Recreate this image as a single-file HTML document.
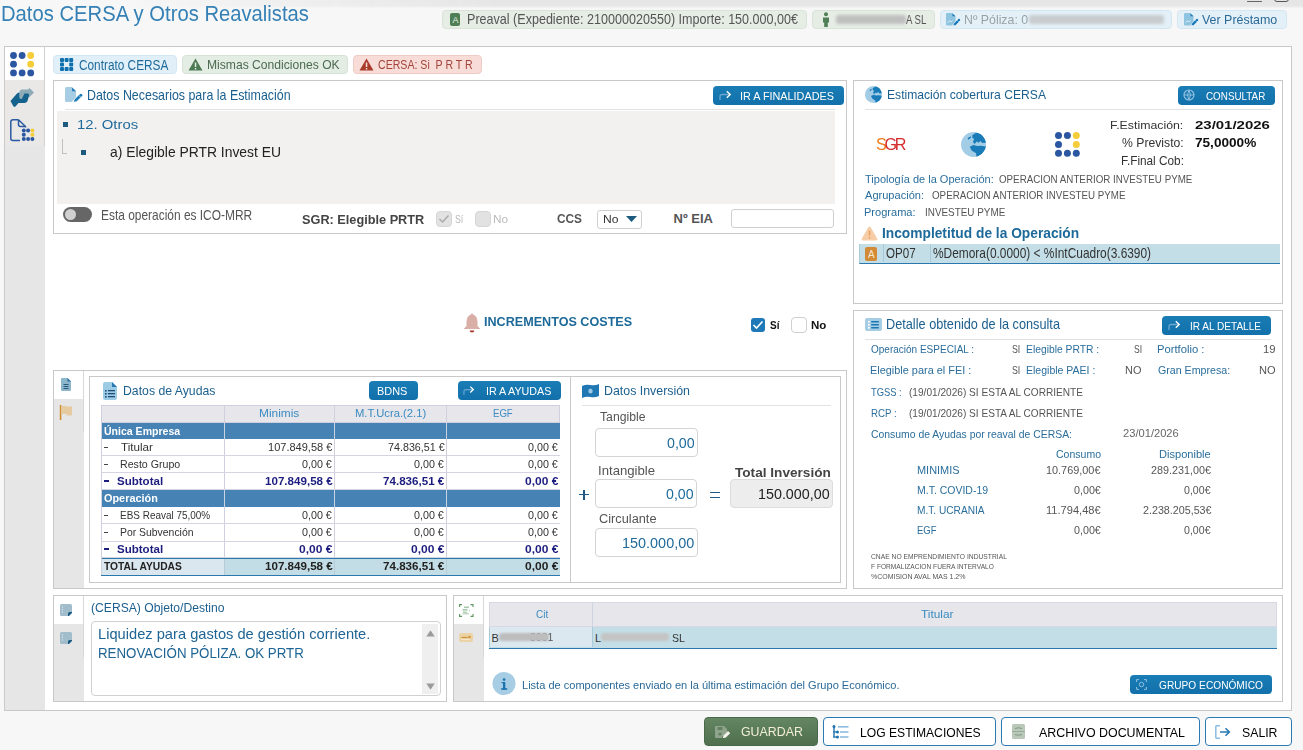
<!DOCTYPE html>
<html><head><meta charset="utf-8"><style>
html,body{margin:0;padding:0;}
body{width:1303px;height:750px;overflow:hidden;position:relative;background:#f7f7f7;font-family:"Liberation Sans",sans-serif;}
div{box-sizing:border-box;}
</style></head><body>
<div style="position:absolute;left:0px;top:0px;width:1303px;height:9px;background:linear-gradient(#e5e5e5 0,#e7e7e7 6px,#f6f6f6 8px,#f7f7f7 9px);-webkit-mask-image:linear-gradient(to right,transparent 120px,#000 500px);mask-image:linear-gradient(to right,transparent 120px,#000 500px);"></div>
<div style="position:absolute;left:1247px;top:0.8px;width:15px;height:1.4000000000000001px;background:#666;border-radius:1px;"></div>
<div style="position:absolute;left:1274px;top:-8px;width:15px;height:10.2px;border:1.3px solid #555;border-radius:3px;"></div>
<div style="position:absolute;left:1.06px;top:3.00px;font-family:'Liberation Sans';font-size:22.0px;font-weight:400;color:#3580b5;letter-spacing:0px;line-height:1;white-space:pre;transform:scaleX(0.9192);transform-origin:0 50%;">Datos CERSA y Otros Reavalistas</div>
<div style="position:absolute;left:442px;top:10px;width:365px;height:19px;background:#e5ede5;border:1px solid #d8e4d8;border-radius:4px;"></div>
<div style="position:absolute;left:450px;top:13px;width:10px;height:13px;background:#4f7f55;border-radius:2px;"></div>
<div style="position:absolute;left:452.50px;top:16.00px;font-family:'Liberation Sans';font-size:9px;font-weight:400;color:#e8f0e8;letter-spacing:0px;line-height:1;white-space:pre;transform:scaleX(1.0000);transform-origin:0 50%;">A</div>
<div style="position:absolute;left:466.76px;top:11.00px;font-family:'Liberation Sans';font-size:15.0px;font-weight:400;color:#555;letter-spacing:0px;line-height:1;white-space:pre;transform:scaleX(0.8373);transform-origin:0 50%;">Preaval (Expediente: 210000020550) Importe: 150.000,00€</div>
<div style="position:absolute;left:812px;top:10px;width:123px;height:19px;background:#e5ede5;border:1px solid #d8e4d8;border-radius:4px;"></div>
<svg style="position:absolute;left:822px;top:12px" width="8" height="15" viewBox="0 0 8 15"><circle cx="4" cy="2.2" r="2" fill="#4f7f55"/><path d="M1 5.5h6v5H5.8V15H2.2V10.5H1z" fill="#4f7f55"/></svg>
<div style="position:absolute;left:836px;top:15px;width:70px;height:9px;background:#bfbfbf;filter:blur(1.4px);border-radius:3px;"></div>
<div style="position:absolute;left:906.00px;top:13.00px;font-family:'Liberation Sans';font-size:13.0px;font-weight:400;color:#555;letter-spacing:0px;line-height:1;white-space:pre;transform:scaleX(0.7407);transform-origin:0 50%;">A SL</div>
<div style="position:absolute;left:940px;top:10px;width:232px;height:19px;background:#e3f0f8;border:1px solid #d3e7f3;border-radius:4px;"></div>
<svg style="position:absolute;left:946px;top:13px" width="15" height="13" viewBox="0 0 15 13"><path d="M0 1.2Q0 0 1.2 0H6.5L9.5 3V9L6 12.5H1.2Q0 12.5 0 11.3z" fill="#8fc4e0"/><path d="M6.3 0.5L9.5 3.3H6.6z" fill="#1a7ab8"/><path d="M1.5 10L3.5 7.5L5 9L6.5 7.5" fill="none" stroke="#e6f2f8" stroke-width="0.8"/><path d="M7 12.8L7.7 10.4L11.3 6.8L13.3 8.8L9.7 12.4z" fill="#1a7ab8" stroke="#e3f0f8" stroke-width="0.7"/><circle cx="13" cy="6.9" r="1.2" fill="#1a7ab8"/></svg>
<div style="position:absolute;left:964.25px;top:13.00px;font-family:'Liberation Sans';font-size:13.0px;font-weight:400;color:#9aa0a4;letter-spacing:0px;line-height:1;white-space:pre;transform:scaleX(0.9478);transform-origin:0 50%;">Nº Póliza: 0</div>
<div style="position:absolute;left:1029px;top:15px;width:135px;height:9px;background:#c8ccce;filter:blur(1.4px);border-radius:3px;"></div>
<div style="position:absolute;left:1177px;top:10px;width:110px;height:19px;background:#e3f0f8;border:1px solid #d3e7f3;border-radius:4px;"></div>
<svg style="position:absolute;left:1184px;top:13px" width="15" height="13" viewBox="0 0 15 13"><path d="M0 1.2Q0 0 1.2 0H6.5L9.5 3V9L6 12.5H1.2Q0 12.5 0 11.3z" fill="#8fc4e0"/><path d="M6.3 0.5L9.5 3.3H6.6z" fill="#1a7ab8"/><path d="M1.5 10L3.5 7.5L5 9L6.5 7.5" fill="none" stroke="#e6f2f8" stroke-width="0.8"/><path d="M7 12.8L7.7 10.4L11.3 6.8L13.3 8.8L9.7 12.4z" fill="#1a7ab8" stroke="#e3f0f8" stroke-width="0.7"/><circle cx="13" cy="6.9" r="1.2" fill="#1a7ab8"/></svg>
<div style="position:absolute;left:1202.20px;top:13.00px;font-family:'Liberation Sans';font-size:13.0px;font-weight:400;color:#2a6a98;letter-spacing:0px;line-height:1;white-space:pre;transform:scaleX(0.9557);transform-origin:0 50%;">Ver Préstamo</div>
<div style="position:absolute;left:4px;top:46px;width:1288px;height:665px;background:#fff;border:1px solid #c9c9c9;"></div>
<div style="position:absolute;left:5px;top:47px;width:40px;height:663px;background:#e6e6e6;"></div>
<div style="position:absolute;left:5px;top:80px;width:39px;height:66px;background:#e9e8e7;"></div>
<div style="position:absolute;left:44px;top:47px;width:1px;height:99px;background:#d2d2d2;"></div>
<div style="position:absolute;left:5px;top:47px;width:39px;height:33px;background:#fff;"></div>
<svg style="position:absolute;left:10px;top:52px" width="25" height="25" viewBox="0 0 25 25"><circle cx="3.5" cy="3.5" r="3.4" fill="#2b57a2"/><circle cx="12.1" cy="3.5" r="3.4" fill="#2b57a2"/><circle cx="20.7" cy="3.5" r="3.4" fill="#f5cd3b"/><circle cx="3.5" cy="12.2" r="3.4" fill="#2b57a2"/><circle cx="20.7" cy="12.2" r="3.4" fill="#f5cd3b"/><circle cx="3.5" cy="20.9" r="3.4" fill="#2b57a2"/><circle cx="12.1" cy="20.9" r="3.4" fill="#2b57a2"/><circle cx="20.7" cy="20.9" r="3.4" fill="#2b57a2"/></svg>
<svg style="position:absolute;left:10px;top:88px" width="24" height="19" viewBox="0 0 24 19"><path d="M9.5 3.5Q10 1.5 12 1.5H18L19.5 0L24 4.5L19 9.5H14V10H9.5z" fill="#8eabb8"/><path d="M0.5 13L7 5.5Q8 4.5 9.5 4.5V9.5Q9.5 10.5 10.5 10.5H12L14.5 5.5H17.5Q19.5 5.5 19 7.5L17.5 13Q16.5 15 14.5 15H8.5L5.5 18.5Q4.5 19 3.5 18.5z" fill="#15628c"/></svg>
<svg style="position:absolute;left:10px;top:119px" width="25" height="23" viewBox="0 0 25 23"><path d="M8.5 0.8H3Q0.8 0.8 0.8 3V19.5Q0.8 21.5 3 21.5H10 M8.5 0.8L15.5 7.5V8.5 M8.5 0.8V5.5Q8.5 7.5 10.5 7.5H15.5" fill="none" stroke="#2a5aa0" stroke-width="1.5"/><rect x="10.5" y="9" width="14.5" height="14" fill="#e8e8e7"/><circle cx="13.8" cy="11.5" r="2.0" fill="#2b57a2"/><circle cx="18.1" cy="11.5" r="2.0" fill="#2b57a2"/><circle cx="22.4" cy="11.5" r="2.0" fill="#f5cd3b"/><circle cx="13.8" cy="15.7" r="2.0" fill="#2b57a2"/><circle cx="22.4" cy="15.7" r="2.0" fill="#f5cd3b"/><circle cx="13.8" cy="19.9" r="2.0" fill="#2b57a2"/><circle cx="18.1" cy="19.9" r="2.0" fill="#2b57a2"/><circle cx="22.4" cy="19.9" r="2.0" fill="#2b57a2"/></svg>
<div style="position:absolute;left:53px;top:55px;width:124px;height:19px;background:#e1f0f8;border:1px solid #d2e7f3;border-radius:4px;"></div>
<svg style="position:absolute;left:60px;top:58px" width="14" height="14" viewBox="0 0 14 14"><rect x="0.0" y="0.0" width="4" height="4" rx="1" fill="#0f70ad"/><rect x="4.6" y="0.0" width="4" height="4" rx="1" fill="#0f70ad"/><rect x="9.2" y="0.0" width="4" height="4" rx="1" fill="#0f70ad"/><rect x="0.0" y="4.5" width="4" height="4" rx="1" fill="#0f70ad"/><rect x="9.2" y="4.5" width="4" height="4" rx="1" fill="#0f70ad"/><rect x="0.0" y="9.0" width="4" height="4" rx="1" fill="#0f70ad"/><rect x="4.6" y="9.0" width="4" height="4" rx="1" fill="#0f70ad"/><rect x="9.2" y="9.0" width="4" height="4" rx="1" fill="#0f70ad"/></svg>
<div style="position:absolute;left:78.50px;top:58.00px;font-family:'Liberation Sans';font-size:14.0px;font-weight:400;color:#1e6a9a;letter-spacing:0px;line-height:1;white-space:pre;transform:scaleX(0.8443);transform-origin:0 50%;">Contrato CERSA</div>
<div style="position:absolute;left:182px;top:55px;width:166px;height:19px;background:#e4ede4;border:1px solid #d5e2d5;border-radius:4px;"></div>
<svg style="position:absolute;left:188px;top:58px" width="15" height="13" viewBox="0 0 15 13"><path d="M7.5 0.5L14.5 12.5H0.5z" fill="#4c7a52"/><rect x="6.8" y="4.5" width="1.5" height="4.5" fill="#e4ede4"/><rect x="6.8" y="10" width="1.5" height="1.5" fill="#e4ede4"/></svg>
<div style="position:absolute;left:206.77px;top:58.00px;font-family:'Liberation Sans';font-size:13.0px;font-weight:400;color:#4d6a52;letter-spacing:0px;line-height:1;white-space:pre;transform:scaleX(0.9319);transform-origin:0 50%;">Mismas Condiciones OK</div>
<div style="position:absolute;left:353px;top:55px;width:129px;height:19px;background:#f8dcd8;border:1px solid #f0cbc6;border-radius:4px;"></div>
<svg style="position:absolute;left:359px;top:58px" width="15" height="13" viewBox="0 0 15 13"><path d="M7.5 0.5L14.5 12.5H0.5z" fill="#a83b2c"/><rect x="6.8" y="4.5" width="1.5" height="4.5" fill="#f8dcd8"/><rect x="6.8" y="10" width="1.5" height="1.5" fill="#f8dcd8"/></svg>
<div style="position:absolute;left:378.40px;top:58.00px;font-family:'Liberation Sans';font-size:13.0px;font-weight:400;color:#a3443a;letter-spacing:0px;line-height:1;white-space:pre;transform:scaleX(0.8138);transform-origin:0 50%;">CERSA: Si  P R T R</div>
<div style="position:absolute;left:53px;top:80px;width:794px;height:154px;border:1px solid #c9c9c9;background:#fff;"></div>
<svg style="position:absolute;left:65px;top:87px" width="18" height="16" viewBox="0 0 18 16"><path d="M0 1.5Q0 0 1.5 0H7L11 4V10.5L6.5 15H1.5Q0 15 0 13.5z" fill="#a6cde3"/><path d="M6.8 0.6L11 4.3H7.3z" fill="#1a7ab8"/><path d="M8.3 15.2L9.2 12.4L13.6 8L16 10.4L11.6 14.8z" fill="#1a7ab8" stroke="#fff" stroke-width="0.8"/><circle cx="15.8" cy="8.2" r="1.5" fill="#1a7ab8"/></svg>
<div style="position:absolute;left:86.57px;top:87.00px;font-family:'Liberation Sans';font-size:15.0px;font-weight:400;color:#1b5f8f;letter-spacing:0px;line-height:1;white-space:pre;transform:scaleX(0.8279);transform-origin:0 50%;">Datos Necesarios para la Estimación</div>
<div style="position:absolute;left:713px;top:86px;width:131px;height:19px;background:linear-gradient(#1a7db5,#1270aa);border-radius:4px;"></div>
<svg style="position:absolute;left:719px;top:90px" width="14" height="11" viewBox="0 0 14 11"><path d="M1 10V6.5Q1 4.5 3 4.5H11" fill="none" stroke="#6aa6d0" stroke-width="1.3"/><path d="M7.8 1.3L11.2 4.5L7.8 7.7" fill="none" stroke="#fff" stroke-width="1.4"/></svg>
<div style="position:absolute;left:740.41px;top:91.00px;font-family:'Liberation Sans';font-size:11.0px;font-weight:400;color:#fff;letter-spacing:0px;line-height:1;white-space:pre;transform:scaleX(0.9851);transform-origin:0 50%;">IR A FINALIDADES</div>
<div style="position:absolute;left:65px;top:109px;width:770px;height:1px;background:#e2e2e2;"></div>
<div style="position:absolute;left:57px;top:111px;width:778px;height:93px;background:#f2f1ef;"></div>
<div style="position:absolute;left:63px;top:122px;width:5px;height:5px;background:#1d5a80;"></div>
<div style="position:absolute;left:77.46px;top:118.00px;font-family:'Liberation Sans';font-size:13.0px;font-weight:400;color:#1e6a9a;letter-spacing:0px;line-height:1;white-space:pre;transform:scaleX(1.1423);transform-origin:0 50%;">12. Otros</div>
<div style="position:absolute;left:62px;top:139px;width:1px;height:15px;background:#c0c0c0;"></div>
<div style="position:absolute;left:62px;top:153px;width:5px;height:1px;background:#c0c0c0;"></div>
<div style="position:absolute;left:81px;top:150px;width:5px;height:5px;background:#1d5a80;"></div>
<div style="position:absolute;left:109.90px;top:144.00px;font-family:'Liberation Sans';font-size:15.0px;font-weight:400;color:#222;letter-spacing:0px;line-height:1;white-space:pre;transform:scaleX(0.9255);transform-origin:0 50%;">a) Elegible PRTR Invest EU</div>
<div style="position:absolute;left:63px;top:207px;width:29px;height:15px;background:#666;border-radius:8px;"></div>
<div style="position:absolute;left:65px;top:209px;width:11px;height:11px;border-radius:50%;background:#d0d0d0;"></div>
<div style="position:absolute;left:100.70px;top:207.00px;font-family:'Liberation Sans';font-size:15.0px;font-weight:400;color:#555;letter-spacing:0px;line-height:1;white-space:pre;transform:scaleX(0.7952);transform-origin:0 50%;">Esta operación es ICO-MRR</div>
<div style="position:absolute;left:302.00px;top:213.00px;font-family:'Liberation Sans';font-size:13.0px;font-weight:700;color:#444;letter-spacing:0px;line-height:1;white-space:pre;transform:scaleX(0.9784);transform-origin:0 50%;">SGR: Elegible PRTR</div>
<div style="position:absolute;left:436px;top:211px;width:16px;height:16px;background:#e2e2e2;border:1px solid #d6d6d6;border-radius:4px;"></div>
<svg style="position:absolute;left:438px;top:214px" width="12" height="10" viewBox="0 0 12 10"><path d="M1.5 5L4.5 8L10.5 1.5" fill="none" stroke="#a8a8a8" stroke-width="1.4"/></svg>
<div style="position:absolute;left:455.00px;top:214.00px;font-family:'Liberation Sans';font-size:11.0px;font-weight:400;color:#bbb;letter-spacing:0px;line-height:1;white-space:pre;transform:scaleX(0.8000);transform-origin:0 50%;">Sí</div>
<div style="position:absolute;left:475px;top:211px;width:16px;height:16px;background:#e2e2e2;border:1px solid #d6d6d6;border-radius:4px;"></div>
<div style="position:absolute;left:492.92px;top:214.00px;font-family:'Liberation Sans';font-size:11.0px;font-weight:400;color:#bbb;letter-spacing:0px;line-height:1;white-space:pre;transform:scaleX(1.0769);transform-origin:0 50%;">No</div>
<div style="position:absolute;left:556.70px;top:212.00px;font-family:'Liberation Sans';font-size:13.0px;font-weight:700;color:#555;letter-spacing:0px;line-height:1;white-space:pre;transform:scaleX(0.9111);transform-origin:0 50%;">CCS</div>
<div style="position:absolute;left:597px;top:210px;width:45px;height:19px;border:1px solid #cfcfcf;border-radius:3px;background:#fff;"></div>
<div style="position:absolute;left:603.20px;top:214.00px;font-family:'Liberation Sans';font-size:11.0px;font-weight:400;color:#333;letter-spacing:0px;line-height:1;white-space:pre;transform:scaleX(1.1000);transform-origin:0 50%;">No</div>
<svg style="position:absolute;left:626px;top:216px" width="11" height="7" viewBox="0 0 11 7"><path d="M0 0H11L5.5 6z" fill="#1d5a80"/></svg>
<div style="position:absolute;left:673.60px;top:212.00px;font-family:'Liberation Sans';font-size:13.0px;font-weight:700;color:#555;letter-spacing:0px;line-height:1;white-space:pre;transform:scaleX(1.0000);transform-origin:0 50%;">Nº EIA</div>
<div style="position:absolute;left:731px;top:209px;width:103px;height:19px;border:1px solid #cfcfcf;border-radius:3px;background:#fff;"></div>
<div style="position:absolute;left:853px;top:80px;width:430px;height:224px;border:1px solid #c9c9c9;background:#fff;"></div>
<svg style="position:absolute;left:865px;top:86px" width="17" height="17" viewBox="0 0 20 20"><defs><clipPath id="gc865"><circle cx="10" cy="10" r="10"/></clipPath></defs><circle cx="10" cy="10" r="10" fill="#a3cde6"/><g clip-path="url(#gc865)" fill="#1a7bb9"><path d="M9 2.5L12 0.6Q16 0.8 18.5 3L20.5 8.5L17 8.8L15.5 7.2L14 8.6L12.5 7.6L11 9.6L9.5 8L10.5 5.5L9 4.5z"/><path d="M7 11.8L10 10.4L13 11.2L16 10.9L20.5 11.6Q19 16 14.5 20L12.5 20.5L12 17L8.5 14.8z"/><path d="M5.3 5L7.5 3.3L8 4.5L6 6.2z"/></g></svg>
<div style="position:absolute;left:886.57px;top:88.00px;font-family:'Liberation Sans';font-size:13.0px;font-weight:400;color:#1b5f8f;letter-spacing:0px;line-height:1;white-space:pre;transform:scaleX(0.9324);transform-origin:0 50%;">Estimación cobertura CERSA</div>
<div style="position:absolute;left:1178px;top:86px;width:97px;height:19px;background:linear-gradient(#1a7db5,#1270aa);border-radius:4px;"></div>
<svg style="position:absolute;left:1183px;top:89px" width="12" height="12" viewBox="0 0 12 12"><circle cx="6" cy="6" r="5" fill="none" stroke="#8fc0e0" stroke-width="1.2"/><path d="M1 6H11M6 1Q3 6 6 11M6 1Q9 6 6 11" fill="none" stroke="#8fc0e0" stroke-width="1"/></svg>
<div style="position:absolute;left:1205.70px;top:91.00px;font-family:'Liberation Sans';font-size:11.0px;font-weight:400;color:#fff;letter-spacing:0px;line-height:1;white-space:pre;transform:scaleX(0.8955);transform-origin:0 50%;">CONSULTAR</div>
<div style="position:absolute;left:865px;top:109px;width:406px;height:1px;background:#e2e2e2;"></div>
<div style="position:absolute;left:876px;top:136px;font-family:'Liberation Sans';font-size:17px;font-weight:400;letter-spacing:-2.4px;line-height:1;color:#d42a2a;transform:scaleX(0.95);transform-origin:0 0"><span style="color:#ef7a1a">S</span>GR</div>
<svg style="position:absolute;left:961px;top:132px" width="25" height="25" viewBox="0 0 20 20"><defs><clipPath id="gc961"><circle cx="10" cy="10" r="10"/></clipPath></defs><circle cx="10" cy="10" r="10" fill="#a3cde6"/><g clip-path="url(#gc961)" fill="#1a7bb9"><path d="M9 2.5L12 0.6Q16 0.8 18.5 3L20.5 8.5L17 8.8L15.5 7.2L14 8.6L12.5 7.6L11 9.6L9.5 8L10.5 5.5L9 4.5z"/><path d="M7 11.8L10 10.4L13 11.2L16 10.9L20.5 11.6Q19 16 14.5 20L12.5 20.5L12 17L8.5 14.8z"/><path d="M5.3 5L7.5 3.3L8 4.5L6 6.2z"/></g></svg>
<svg style="position:absolute;left:1055px;top:132px" width="26" height="26" viewBox="0 0 26 26"><circle cx="3.5" cy="3.5" r="3.5" fill="#2b57a2"/><circle cx="12.4" cy="3.5" r="3.5" fill="#2b57a2"/><circle cx="21.3" cy="3.5" r="3.5" fill="#f5cd3b"/><circle cx="3.5" cy="12.4" r="3.5" fill="#2b57a2"/><circle cx="21.3" cy="12.4" r="3.5" fill="#f5cd3b"/><circle cx="3.5" cy="21.3" r="3.5" fill="#2b57a2"/><circle cx="12.4" cy="21.3" r="3.5" fill="#2b57a2"/><circle cx="21.3" cy="21.3" r="3.5" fill="#2b57a2"/></svg>
<div style="position:absolute;left:1110.38px;top:120.00px;font-family:'Liberation Sans';font-size:11.0px;font-weight:400;color:#333;letter-spacing:0px;line-height:1;white-space:pre;transform:scaleX(1.1203);transform-origin:0 50%;">F.Estimación:</div>
<div style="position:absolute;left:1194.80px;top:120.00px;font-family:'Liberation Sans';font-size:11.0px;font-weight:700;color:#111;letter-spacing:0px;line-height:1;white-space:pre;transform:scaleX(1.3600);transform-origin:0 50%;">23/01/2026</div>
<div style="position:absolute;left:1122.20px;top:136.00px;font-family:'Liberation Sans';font-size:13.0px;font-weight:400;color:#333;letter-spacing:0px;line-height:1;white-space:pre;transform:scaleX(0.9385);transform-origin:0 50%;">% Previsto:</div>
<div style="position:absolute;left:1194.80px;top:136.00px;font-family:'Liberation Sans';font-size:13.0px;font-weight:700;color:#111;letter-spacing:0px;line-height:1;white-space:pre;transform:scaleX(1.0458);transform-origin:0 50%;">75,0000%</div>
<div style="position:absolute;left:1120.59px;top:154.00px;font-family:'Liberation Sans';font-size:13.0px;font-weight:400;color:#333;letter-spacing:0px;line-height:1;white-space:pre;transform:scaleX(0.9074);transform-origin:0 50%;">F.Final Cob:</div>
<div style="position:absolute;left:865.20px;top:174.00px;font-family:'Liberation Sans';font-size:11.0px;font-weight:400;color:#2a6e9c;letter-spacing:0px;line-height:1;white-space:pre;transform:scaleX(1.0008);transform-origin:0 50%;">Tipología de la Operación:</div>
<div style="position:absolute;left:999.20px;top:174.00px;font-family:'Liberation Sans';font-size:11.0px;font-weight:400;color:#555;letter-spacing:0px;line-height:1;white-space:pre;transform:scaleX(0.8885);transform-origin:0 50%;">OPERACION ANTERIOR INVESTEU PYME</div>
<div style="position:absolute;left:865.20px;top:190.00px;font-family:'Liberation Sans';font-size:11.0px;font-weight:400;color:#2a6e9c;letter-spacing:0px;line-height:1;white-space:pre;transform:scaleX(1.0052);transform-origin:0 50%;">Agrupación:</div>
<div style="position:absolute;left:931.50px;top:190.00px;font-family:'Liberation Sans';font-size:11.0px;font-weight:400;color:#555;letter-spacing:0px;line-height:1;white-space:pre;transform:scaleX(0.8889);transform-origin:0 50%;">OPERACION ANTERIOR INVESTEU PYME</div>
<div style="position:absolute;left:864.20px;top:207.00px;font-family:'Liberation Sans';font-size:11.0px;font-weight:400;color:#2a6e9c;letter-spacing:0px;line-height:1;white-space:pre;transform:scaleX(1.0040);transform-origin:0 50%;">Programa:</div>
<div style="position:absolute;left:925.30px;top:207.00px;font-family:'Liberation Sans';font-size:11.0px;font-weight:400;color:#555;letter-spacing:0px;line-height:1;white-space:pre;transform:scaleX(0.9000);transform-origin:0 50%;">INVESTEU PYME</div>
<svg style="position:absolute;left:861px;top:226px" width="17" height="15" viewBox="0 0 17 15"><path d="M8.5 0.5Q9.3 0.5 9.8 1.4L16.3 12.8Q16.8 14.5 15.2 14.5H1.8Q0.2 14.5 0.7 12.8L7.2 1.4Q7.7 0.5 8.5 0.5z" fill="#f6cda6"/><rect x="7.8" y="4.5" width="1.5" height="5" fill="#e8a060"/><rect x="7.8" y="11" width="1.5" height="1.5" fill="#e8a060"/></svg>
<div style="position:absolute;left:882.28px;top:225.00px;font-family:'Liberation Sans';font-size:15.0px;font-weight:700;color:#1d6a9a;letter-spacing:0px;line-height:1;white-space:pre;transform:scaleX(0.9169);transform-origin:0 50%;">Incompletitud de la Operación</div>
<div style="position:absolute;left:859px;top:244px;width:421px;height:20px;background:#c3dee6;border-bottom:1px solid #2a78ae;border-left:1px solid #a9cad8;"></div>
<div style="position:absolute;left:883px;top:244px;width:1px;height:18px;background:#a9cad8;"></div>
<div style="position:absolute;left:930px;top:244px;width:1px;height:18px;background:#a9cad8;"></div>
<div style="position:absolute;left:865px;top:247px;width:12px;height:14px;background:#d38a36;border-radius:2px;"></div>
<div style="position:absolute;left:868.00px;top:250.00px;font-family:'Liberation Sans';font-size:10px;font-weight:400;color:#f8e8d0;letter-spacing:0px;line-height:1;white-space:pre;transform:scaleX(1.0000);transform-origin:0 50%;">A</div>
<div style="position:absolute;left:886.00px;top:245.00px;font-family:'Liberation Sans';font-size:15.0px;font-weight:400;color:#333;letter-spacing:0px;line-height:1;white-space:pre;transform:scaleX(0.7737);transform-origin:0 50%;">OP07</div>
<div style="position:absolute;left:933.00px;top:245.00px;font-family:'Liberation Sans';font-size:15.0px;font-weight:400;color:#333;letter-spacing:0px;line-height:1;white-space:pre;transform:scaleX(0.7938);transform-origin:0 50%;">%Demora(0.0000) &lt; %IntCuadro(3.6390)</div>
<svg style="position:absolute;left:462px;top:313px" width="20" height="20" viewBox="0 0 20 20"><path d="M10 0.5Q11 0.5 11 1.5Q15.5 3 15.5 9V13L18.5 16H1.5L4.5 13V9Q4.5 3 9 1.5Q9 0.5 10 0.5z" fill="#d9aea6"/><path d="M7.5 17.5H12.5Q12 19.5 10 19.5Q8 19.5 7.5 17.5z" fill="#a8342a"/></svg>
<div style="position:absolute;left:483.93px;top:315.00px;font-family:'Liberation Sans';font-size:13.0px;font-weight:700;color:#1d6a9a;letter-spacing:0px;line-height:1;white-space:pre;transform:scaleX(0.9691);transform-origin:0 50%;">INCREMENTOS COSTES</div>
<div style="position:absolute;left:751px;top:318px;width:14px;height:14px;background:#1f78b8;border-radius:3px;"></div>
<svg style="position:absolute;left:752px;top:320px" width="12" height="10" viewBox="0 0 12 10"><path d="M1.5 5L4.5 8L10.5 1.5" fill="none" stroke="#fff" stroke-width="1.6"/></svg>
<div style="position:absolute;left:769.50px;top:320.00px;font-family:'Liberation Sans';font-size:11.0px;font-weight:700;color:#111;letter-spacing:0px;line-height:1;white-space:pre;transform:scaleX(0.9091);transform-origin:0 50%;">Sí</div>
<div style="position:absolute;left:791px;top:317px;width:16px;height:16px;background:#fff;border:1px solid #cfcfcf;border-radius:4px;"></div>
<div style="position:absolute;left:810.60px;top:320.00px;font-family:'Liberation Sans';font-size:11.0px;font-weight:700;color:#111;letter-spacing:0px;line-height:1;white-space:pre;transform:scaleX(1.0467);transform-origin:0 50%;">No</div>
<div style="position:absolute;left:53px;top:370px;width:794px;height:219px;border:1px solid #c9c9c9;background:#fff;"></div>
<div style="position:absolute;left:54px;top:371px;width:30px;height:217px;background:#e6e6e6;"></div>
<div style="position:absolute;left:54px;top:371px;width:30px;height:28px;background:#fff;"></div>
<div style="position:absolute;left:83px;top:371px;width:1px;height:61px;background:#d8d8d8;"></div>
<svg style="position:absolute;left:61px;top:378px" width="10" height="13" viewBox="0 0 10 13"><path d="M0 1Q0 0 1 0H6.5L10 3.5V12Q10 13 9 13H1Q0 13 0 12z" fill="#8cb6cc"/><path d="M6.5 0V3.5H10z" fill="#2a6a9a"/><rect x="2.5" y="6" width="5" height="1" fill="#2a5a7a"/><rect x="2.5" y="8" width="5" height="1" fill="#2a5a7a"/><rect x="2.5" y="10" width="5" height="1" fill="#2a5a7a"/></svg>
<svg style="position:absolute;left:59px;top:405px" width="14" height="15" viewBox="0 0 14 15"><rect x="0.8" y="0" width="1.6" height="15" fill="#d08e30"/><path d="M2.3 1H7.5V1.6H13V10.5H7.5V9H2.3z" fill="#e5cb9f"/></svg>
<div style="position:absolute;left:89px;top:376px;width:752px;height:207px;border:1px solid #c9c9c9;background:#fff;"></div>
<div style="position:absolute;left:570px;top:377px;width:1px;height:205px;background:#c9c9c9;"></div>
<svg style="position:absolute;left:103px;top:382px" width="14" height="18" viewBox="0 0 14 18"><path d="M0 2Q0 0 2 0H9L14 5V16Q14 18 12 18H2Q0 18 0 16z" fill="#9ccbe6"/><path d="M9 0V5H14z" fill="#2a78b0"/><g fill="#1e4e78"><rect x="2" y="8" width="1.6" height="1.6"/><rect x="2" y="11" width="1.6" height="1.6"/><rect x="2" y="14" width="1.6" height="1.6"/><rect x="5" y="8" width="7" height="1.3"/><rect x="5" y="11" width="7" height="1.3"/><rect x="5" y="14" width="7" height="1.3"/></g></svg>
<div style="position:absolute;left:123.06px;top:384.00px;font-family:'Liberation Sans';font-size:13.0px;font-weight:400;color:#1b5f8f;letter-spacing:0px;line-height:1;white-space:pre;transform:scaleX(0.9423);transform-origin:0 50%;">Datos de Ayudas</div>
<div style="position:absolute;left:369px;top:381px;width:49px;height:19px;background:linear-gradient(#1a7db5,#1270aa);border-radius:4px;"></div>
<div style="position:absolute;left:377.31px;top:386.00px;font-family:'Liberation Sans';font-size:11.0px;font-weight:400;color:#fff;letter-spacing:0px;line-height:1;white-space:pre;transform:scaleX(0.9931);transform-origin:0 50%;">BDNS</div>
<div style="position:absolute;left:458px;top:381px;width:103px;height:19px;background:linear-gradient(#1a7db5,#1270aa);border-radius:4px;"></div>
<svg style="position:absolute;left:463px;top:385px" width="13" height="11" viewBox="0 0 14 11"><path d="M1 10V6.5Q1 4.5 3 4.5H11" fill="none" stroke="#6aa6d0" stroke-width="1.3"/><path d="M7.8 1.3L11.2 4.5L7.8 7.7" fill="none" stroke="#fff" stroke-width="1.4"/></svg>
<div style="position:absolute;left:485.73px;top:386.00px;font-family:'Liberation Sans';font-size:11.0px;font-weight:400;color:#fff;letter-spacing:0px;line-height:1;white-space:pre;transform:scaleX(0.9742);transform-origin:0 50%;">IR A AYUDAS</div>
<div style="position:absolute;left:101px;top:405px;width:459px;height:18px;background:#e7e7eb;border:1px solid #cfcfdf;"></div>
<div style="position:absolute;left:224px;top:405px;width:1px;height:153px;background:#cfcfdf;"></div>
<div style="position:absolute;left:334px;top:405px;width:1px;height:153px;background:#cfcfdf;"></div>
<div style="position:absolute;left:446px;top:405px;width:1px;height:153px;background:#cfcfdf;"></div>
<div style="position:absolute;left:259.32px;top:408.00px;font-family:'Liberation Sans';font-size:11.0px;font-weight:400;color:#3b8bc2;letter-spacing:0px;line-height:1;white-space:pre;transform:scaleX(1.0806);transform-origin:0 50%;">Minimis</div>
<div style="position:absolute;left:354.68px;top:408.00px;font-family:'Liberation Sans';font-size:11.0px;font-weight:400;color:#3b8bc2;letter-spacing:0px;line-height:1;white-space:pre;transform:scaleX(1.0221);transform-origin:0 50%;">M.T.Ucra.(2.1)</div>
<div style="position:absolute;left:493.33px;top:408.00px;font-family:'Liberation Sans';font-size:11.0px;font-weight:400;color:#3b8bc2;letter-spacing:0px;line-height:1;white-space:pre;transform:scaleX(0.8727);transform-origin:0 50%;">EGF</div>
<div style="position:absolute;left:101px;top:423px;width:459px;height:16px;background:#4682b4;"></div>
<div style="position:absolute;left:224px;top:423px;width:1px;height:16px;background:#c8d4e4;"></div>
<div style="position:absolute;left:334px;top:423px;width:1px;height:16px;background:#c8d4e4;"></div>
<div style="position:absolute;left:446px;top:423px;width:1px;height:16px;background:#c8d4e4;"></div>
<div style="position:absolute;left:101px;top:455px;width:459px;height:1px;background:#d4d4e2;"></div>
<div style="position:absolute;left:101px;top:472px;width:459px;height:1px;background:#d4d4e2;"></div>
<div style="position:absolute;left:101px;top:489px;width:459px;height:1px;background:#d4d4e2;"></div>
<div style="position:absolute;left:101px;top:490px;width:459px;height:17px;background:#4682b4;"></div>
<div style="position:absolute;left:224px;top:490px;width:1px;height:17px;background:#c8d4e4;"></div>
<div style="position:absolute;left:334px;top:490px;width:1px;height:17px;background:#c8d4e4;"></div>
<div style="position:absolute;left:446px;top:490px;width:1px;height:17px;background:#c8d4e4;"></div>
<div style="position:absolute;left:101px;top:523px;width:459px;height:1px;background:#d4d4e2;"></div>
<div style="position:absolute;left:101px;top:541px;width:459px;height:1px;background:#d4d4e2;"></div>
<div style="position:absolute;left:101px;top:557px;width:459px;height:1px;background:#d4d4e2;"></div>
<div style="position:absolute;left:101px;top:558px;width:123px;height:17px;background:#dbe7ef;"></div>
<div style="position:absolute;left:224px;top:558px;width:336px;height:17px;background:#c3dde6;"></div>
<div style="position:absolute;left:224px;top:559px;width:1px;height:16px;background:#b8ccd8;"></div>
<div style="position:absolute;left:334px;top:559px;width:1px;height:16px;background:#b8ccd8;"></div>
<div style="position:absolute;left:446px;top:559px;width:1px;height:16px;background:#b8ccd8;"></div>
<div style="position:absolute;left:101px;top:558px;width:459px;height:1px;background:#2a78ae;"></div>
<div style="position:absolute;left:101px;top:575px;width:459px;height:1px;background:#2a78ae;"></div>
<div style="position:absolute;left:101px;top:423px;width:1px;height:152px;background:#cfcfdf;"></div>
<div style="position:absolute;left:104.40px;top:426.00px;font-family:'Liberation Sans';font-size:11.0px;font-weight:700;color:#fff;letter-spacing:0px;line-height:1;white-space:pre;transform:scaleX(0.9575);transform-origin:0 50%;">Única Empresa</div>
<div style="position:absolute;left:104px;top:447px;width:4px;height:1px;background:#444;"></div>
<div style="position:absolute;left:120.50px;top:442.00px;font-family:'Liberation Sans';font-size:11.0px;font-weight:400;color:#333;letter-spacing:0px;line-height:1;white-space:pre;transform:scaleX(1.0567);transform-origin:0 50%;">Titular</div>
<div style="position:absolute;left:268.20px;top:442.00px;font-family:'Liberation Sans';font-size:11.0px;font-weight:400;color:#333;letter-spacing:0px;line-height:1;white-space:pre;transform:scaleX(1.0016);transform-origin:0 50%;">107.849,58 €</div>
<div style="position:absolute;left:387.60px;top:442.00px;font-family:'Liberation Sans';font-size:11.0px;font-weight:400;color:#333;letter-spacing:0px;line-height:1;white-space:pre;transform:scaleX(0.9759);transform-origin:0 50%;">74.836,51 €</div>
<div style="position:absolute;left:527.70px;top:442.00px;font-family:'Liberation Sans';font-size:11.0px;font-weight:400;color:#333;letter-spacing:0px;line-height:1;white-space:pre;transform:scaleX(0.9742);transform-origin:0 50%;">0,00 €</div>
<div style="position:absolute;left:104px;top:464px;width:4px;height:1px;background:#444;"></div>
<div style="position:absolute;left:119.53px;top:459.00px;font-family:'Liberation Sans';font-size:11.0px;font-weight:400;color:#333;letter-spacing:0px;line-height:1;white-space:pre;transform:scaleX(0.9656);transform-origin:0 50%;">Resto Grupo</div>
<div style="position:absolute;left:302.10px;top:459.00px;font-family:'Liberation Sans';font-size:11.0px;font-weight:400;color:#333;letter-spacing:0px;line-height:1;white-space:pre;transform:scaleX(0.9742);transform-origin:0 50%;">0,00 €</div>
<div style="position:absolute;left:414.00px;top:459.00px;font-family:'Liberation Sans';font-size:11.0px;font-weight:400;color:#333;letter-spacing:0px;line-height:1;white-space:pre;transform:scaleX(0.9742);transform-origin:0 50%;">0,00 €</div>
<div style="position:absolute;left:527.70px;top:459.00px;font-family:'Liberation Sans';font-size:11.0px;font-weight:400;color:#333;letter-spacing:0px;line-height:1;white-space:pre;transform:scaleX(0.9742);transform-origin:0 50%;">0,00 €</div>
<div style="position:absolute;left:104px;top:480.2px;width:5px;height:1.6000000000000227px;background:#1d1d80;"></div>
<div style="position:absolute;left:117.00px;top:476.00px;font-family:'Liberation Sans';font-size:11.0px;font-weight:700;color:#1d1d80;letter-spacing:0px;line-height:1;white-space:pre;transform:scaleX(1.0477);transform-origin:0 50%;">Subtotal</div>
<div style="position:absolute;left:265.00px;top:476.00px;font-family:'Liberation Sans';font-size:11.0px;font-weight:700;color:#1d1d80;letter-spacing:0px;line-height:1;white-space:pre;transform:scaleX(1.0547);transform-origin:0 50%;">107.849,58 €</div>
<div style="position:absolute;left:383.40px;top:476.00px;font-family:'Liberation Sans';font-size:11.0px;font-weight:700;color:#1d1d80;letter-spacing:0px;line-height:1;white-space:pre;transform:scaleX(1.0552);transform-origin:0 50%;">74.836,51 €</div>
<div style="position:absolute;left:525.20px;top:476.00px;font-family:'Liberation Sans';font-size:11.0px;font-weight:700;color:#1d1d80;letter-spacing:0px;line-height:1;white-space:pre;transform:scaleX(1.0903);transform-origin:0 50%;">0,00 €</div>
<div style="position:absolute;left:104.40px;top:493.00px;font-family:'Liberation Sans';font-size:11.0px;font-weight:700;color:#fff;letter-spacing:0px;line-height:1;white-space:pre;transform:scaleX(0.9889);transform-origin:0 50%;">Operación</div>
<div style="position:absolute;left:104px;top:515px;width:4px;height:1px;background:#444;"></div>
<div style="position:absolute;left:119.59px;top:510.00px;font-family:'Liberation Sans';font-size:11.0px;font-weight:400;color:#333;letter-spacing:0px;line-height:1;white-space:pre;transform:scaleX(0.9051);transform-origin:0 50%;">EBS Reaval 75,00%</div>
<div style="position:absolute;left:302.10px;top:510.00px;font-family:'Liberation Sans';font-size:11.0px;font-weight:400;color:#333;letter-spacing:0px;line-height:1;white-space:pre;transform:scaleX(0.9742);transform-origin:0 50%;">0,00 €</div>
<div style="position:absolute;left:414.00px;top:510.00px;font-family:'Liberation Sans';font-size:11.0px;font-weight:400;color:#333;letter-spacing:0px;line-height:1;white-space:pre;transform:scaleX(0.9742);transform-origin:0 50%;">0,00 €</div>
<div style="position:absolute;left:527.70px;top:510.00px;font-family:'Liberation Sans';font-size:11.0px;font-weight:400;color:#333;letter-spacing:0px;line-height:1;white-space:pre;transform:scaleX(0.9742);transform-origin:0 50%;">0,00 €</div>
<div style="position:absolute;left:104px;top:532px;width:4px;height:1px;background:#444;"></div>
<div style="position:absolute;left:119.55px;top:527.00px;font-family:'Liberation Sans';font-size:11.0px;font-weight:400;color:#333;letter-spacing:0px;line-height:1;white-space:pre;transform:scaleX(0.9461);transform-origin:0 50%;">Por Subvención</div>
<div style="position:absolute;left:302.10px;top:527.00px;font-family:'Liberation Sans';font-size:11.0px;font-weight:400;color:#333;letter-spacing:0px;line-height:1;white-space:pre;transform:scaleX(0.9742);transform-origin:0 50%;">0,00 €</div>
<div style="position:absolute;left:414.00px;top:527.00px;font-family:'Liberation Sans';font-size:11.0px;font-weight:400;color:#333;letter-spacing:0px;line-height:1;white-space:pre;transform:scaleX(0.9742);transform-origin:0 50%;">0,00 €</div>
<div style="position:absolute;left:527.70px;top:527.00px;font-family:'Liberation Sans';font-size:11.0px;font-weight:400;color:#333;letter-spacing:0px;line-height:1;white-space:pre;transform:scaleX(0.9742);transform-origin:0 50%;">0,00 €</div>
<div style="position:absolute;left:104px;top:548.2px;width:5px;height:1.599999999999909px;background:#1d1d80;"></div>
<div style="position:absolute;left:117.00px;top:544.00px;font-family:'Liberation Sans';font-size:11.0px;font-weight:700;color:#1d1d80;letter-spacing:0px;line-height:1;white-space:pre;transform:scaleX(1.0477);transform-origin:0 50%;">Subtotal</div>
<div style="position:absolute;left:298.70px;top:544.00px;font-family:'Liberation Sans';font-size:11.0px;font-weight:700;color:#1d1d80;letter-spacing:0px;line-height:1;white-space:pre;transform:scaleX(1.0903);transform-origin:0 50%;">0,00 €</div>
<div style="position:absolute;left:410.80px;top:544.00px;font-family:'Liberation Sans';font-size:11.0px;font-weight:700;color:#1d1d80;letter-spacing:0px;line-height:1;white-space:pre;transform:scaleX(1.0903);transform-origin:0 50%;">0,00 €</div>
<div style="position:absolute;left:525.20px;top:544.00px;font-family:'Liberation Sans';font-size:11.0px;font-weight:700;color:#1d1d80;letter-spacing:0px;line-height:1;white-space:pre;transform:scaleX(1.0903);transform-origin:0 50%;">0,00 €</div>
<div style="position:absolute;left:104.40px;top:561.00px;font-family:'Liberation Sans';font-size:11.0px;font-weight:700;color:#222;letter-spacing:0px;line-height:1;white-space:pre;transform:scaleX(0.9321);transform-origin:0 50%;">TOTAL AYUDAS</div>
<div style="position:absolute;left:265.00px;top:561.00px;font-family:'Liberation Sans';font-size:11.0px;font-weight:700;color:#222;letter-spacing:0px;line-height:1;white-space:pre;transform:scaleX(1.0547);transform-origin:0 50%;">107.849,58 €</div>
<div style="position:absolute;left:383.40px;top:561.00px;font-family:'Liberation Sans';font-size:11.0px;font-weight:700;color:#222;letter-spacing:0px;line-height:1;white-space:pre;transform:scaleX(1.0552);transform-origin:0 50%;">74.836,51 €</div>
<div style="position:absolute;left:525.20px;top:561.00px;font-family:'Liberation Sans';font-size:11.0px;font-weight:700;color:#222;letter-spacing:0px;line-height:1;white-space:pre;transform:scaleX(1.0903);transform-origin:0 50%;">0,00 €</div>
<svg style="position:absolute;left:582px;top:384px" width="17" height="14" viewBox="0 0 17 14"><path d="M0 2Q4 0 8.5 1Q13 2 17 0V12Q13 14 8.5 13Q4 12 0 14z" fill="#1f78b4"/><ellipse cx="8.5" cy="7" rx="2.2" ry="2.6" fill="#9cc8e6"/></svg>
<div style="position:absolute;left:603.65px;top:384.00px;font-family:'Liberation Sans';font-size:13.0px;font-weight:400;color:#1b5f8f;letter-spacing:0px;line-height:1;white-space:pre;transform:scaleX(0.9517);transform-origin:0 50%;">Datos Inversión</div>
<div style="position:absolute;left:582px;top:405px;width:249px;height:1px;background:#e2e2e2;"></div>
<div style="position:absolute;left:599.50px;top:411.00px;font-family:'Liberation Sans';font-size:12.0px;font-weight:400;color:#555;letter-spacing:0px;line-height:1;white-space:pre;transform:scaleX(1.0200);transform-origin:0 50%;">Tangible</div>
<div style="position:absolute;left:595px;top:428px;width:103px;height:29px;border:1px solid #d4d4d4;border-radius:4px;background:#fff;"></div>
<div style="position:absolute;left:667.30px;top:435.00px;font-family:'Liberation Sans';font-size:15.0px;font-weight:400;color:#1e6a9a;letter-spacing:0px;line-height:1;white-space:pre;transform:scaleX(0.9483);transform-origin:0 50%;">0,00</div>
<div style="position:absolute;left:597.89px;top:464.00px;font-family:'Liberation Sans';font-size:13.0px;font-weight:400;color:#555;letter-spacing:0px;line-height:1;white-space:pre;transform:scaleX(1.0127);transform-origin:0 50%;">Intangible</div>
<div style="position:absolute;left:595px;top:479px;width:102px;height:29px;border:1px solid #d4d4d4;border-radius:4px;background:#fff;"></div>
<div style="position:absolute;left:666.10px;top:486.00px;font-family:'Liberation Sans';font-size:15.0px;font-weight:400;color:#1e6a9a;letter-spacing:0px;line-height:1;white-space:pre;transform:scaleX(0.9448);transform-origin:0 50%;">0,00</div>
<div style="position:absolute;left:579px;top:494.2px;width:10px;height:1.1999999999999886px;background:#1d5a8a;"></div>
<div style="position:absolute;left:583.4px;top:490px;width:1.2000000000000455px;height:9.600000000000023px;background:#1d5a8a;"></div>
<div style="position:absolute;left:710px;top:492.2px;width:10px;height:1.1999999999999886px;background:#1d5a8a;"></div>
<div style="position:absolute;left:710px;top:496.6px;width:10px;height:1.1999999999999886px;background:#1d5a8a;"></div>
<div style="position:absolute;left:734.70px;top:466.00px;font-family:'Liberation Sans';font-size:13.0px;font-weight:700;color:#444;letter-spacing:0px;line-height:1;white-space:pre;transform:scaleX(1.0473);transform-origin:0 50%;">Total Inversión</div>
<div style="position:absolute;left:730px;top:479px;width:103px;height:29px;border:1px solid #dcdcdc;border-radius:4px;background:#ededed;"></div>
<div style="position:absolute;left:757.75px;top:486.00px;font-family:'Liberation Sans';font-size:15.0px;font-weight:400;color:#222;letter-spacing:0px;line-height:1;white-space:pre;transform:scaleX(0.9541);transform-origin:0 50%;">150.000,00</div>
<div style="position:absolute;left:598.90px;top:513.00px;font-family:'Liberation Sans';font-size:12.0px;font-weight:400;color:#555;letter-spacing:0px;line-height:1;white-space:pre;transform:scaleX(1.0648);transform-origin:0 50%;">Circulante</div>
<div style="position:absolute;left:595px;top:528px;width:103px;height:29px;border:1px solid #d4d4d4;border-radius:4px;background:#fff;"></div>
<div style="position:absolute;left:622.44px;top:535.00px;font-family:'Liberation Sans';font-size:15.0px;font-weight:400;color:#1e6a9a;letter-spacing:0px;line-height:1;white-space:pre;transform:scaleX(0.9622);transform-origin:0 50%;">150.000,00</div>
<div style="position:absolute;left:853px;top:310px;width:430px;height:279px;border:1px solid #c9c9c9;background:#fff;"></div>
<svg style="position:absolute;left:865px;top:318px" width="17" height="13" viewBox="0 0 17 13"><rect x="0" y="0" width="17" height="13" rx="2" fill="#a6cde3"/><g fill="#fff"><rect x="3" y="3" width="1.8" height="1.6"/><rect x="3" y="6" width="1.8" height="1.6"/><rect x="3" y="9" width="1.8" height="1.6"/></g><g fill="#1a78b4"><rect x="6" y="3" width="8" height="1.5" rx="0.7"/><rect x="6" y="6" width="8" height="1.5" rx="0.7"/><rect x="6" y="9" width="8" height="1.5" rx="0.7"/></g></svg>
<div style="position:absolute;left:886.45px;top:316.00px;font-family:'Liberation Sans';font-size:15.0px;font-weight:400;color:#1b5f8f;letter-spacing:0px;line-height:1;white-space:pre;transform:scaleX(0.8480);transform-origin:0 50%;">Detalle obtenido de la consulta</div>
<div style="position:absolute;left:1162px;top:316px;width:109px;height:19px;background:linear-gradient(#1a7db5,#1270aa);border-radius:4px;"></div>
<svg style="position:absolute;left:1168px;top:320px" width="14" height="11" viewBox="0 0 14 11"><path d="M1 10V6.5Q1 4.5 3 4.5H11" fill="none" stroke="#6aa6d0" stroke-width="1.3"/><path d="M7.8 1.3L11.2 4.5L7.8 7.7" fill="none" stroke="#fff" stroke-width="1.4"/></svg>
<div style="position:absolute;left:1190.09px;top:321.00px;font-family:'Liberation Sans';font-size:11.0px;font-weight:400;color:#fff;letter-spacing:0px;line-height:1;white-space:pre;transform:scaleX(0.9145);transform-origin:0 50%;">IR AL DETALLE</div>
<div style="position:absolute;left:865px;top:339px;width:406px;height:1px;background:#e2e2e2;"></div>
<div style="position:absolute;left:871.40px;top:344.00px;font-family:'Liberation Sans';font-size:11.0px;font-weight:400;color:#2a6e9c;letter-spacing:0px;line-height:1;white-space:pre;transform:scaleX(0.9097);transform-origin:0 50%;">Operación ESPECIAL :</div>
<div style="position:absolute;left:1011.60px;top:344.00px;font-family:'Liberation Sans';font-size:11.0px;font-weight:400;color:#555;letter-spacing:0px;line-height:1;white-space:pre;transform:scaleX(0.8000);transform-origin:0 50%;">SI</div>
<div style="position:absolute;left:1025.76px;top:344.00px;font-family:'Liberation Sans';font-size:11.0px;font-weight:400;color:#2a6e9c;letter-spacing:0px;line-height:1;white-space:pre;transform:scaleX(0.9382);transform-origin:0 50%;">Elegible PRTR :</div>
<div style="position:absolute;left:1133.50px;top:344.00px;font-family:'Liberation Sans';font-size:11.0px;font-weight:400;color:#555;letter-spacing:0px;line-height:1;white-space:pre;transform:scaleX(0.7800);transform-origin:0 50%;">SI</div>
<div style="position:absolute;left:1156.58px;top:344.00px;font-family:'Liberation Sans';font-size:11.0px;font-weight:400;color:#2a6e9c;letter-spacing:0px;line-height:1;white-space:pre;transform:scaleX(1.0222);transform-origin:0 50%;">Portfolio :</div>
<div style="position:absolute;left:1263.17px;top:344.00px;font-family:'Liberation Sans';font-size:11.0px;font-weight:400;color:#555;letter-spacing:0px;line-height:1;white-space:pre;transform:scaleX(1.0273);transform-origin:0 50%;">19</div>
<div style="position:absolute;left:870.41px;top:365.00px;font-family:'Liberation Sans';font-size:11.0px;font-weight:400;color:#2a6e9c;letter-spacing:0px;line-height:1;white-space:pre;transform:scaleX(0.9920);transform-origin:0 50%;">Elegible para el FEI :</div>
<div style="position:absolute;left:1011.60px;top:365.00px;font-family:'Liberation Sans';font-size:11.0px;font-weight:400;color:#555;letter-spacing:0px;line-height:1;white-space:pre;transform:scaleX(0.8000);transform-origin:0 50%;">SI</div>
<div style="position:absolute;left:1025.74px;top:365.00px;font-family:'Liberation Sans';font-size:11.0px;font-weight:400;color:#2a6e9c;letter-spacing:0px;line-height:1;white-space:pre;transform:scaleX(0.9563);transform-origin:0 50%;">Elegible PAEI :</div>
<div style="position:absolute;left:1125.41px;top:365.00px;font-family:'Liberation Sans';font-size:11.0px;font-weight:400;color:#555;letter-spacing:0px;line-height:1;white-space:pre;transform:scaleX(0.9933);transform-origin:0 50%;">NO</div>
<div style="position:absolute;left:1157.60px;top:365.00px;font-family:'Liberation Sans';font-size:11.0px;font-weight:400;color:#2a6e9c;letter-spacing:0px;line-height:1;white-space:pre;transform:scaleX(0.9676);transform-origin:0 50%;">Gran Empresa:</div>
<div style="position:absolute;left:1259.39px;top:365.00px;font-family:'Liberation Sans';font-size:11.0px;font-weight:400;color:#555;letter-spacing:0px;line-height:1;white-space:pre;transform:scaleX(1.0067);transform-origin:0 50%;">NO</div>
<div style="position:absolute;left:871.40px;top:387.00px;font-family:'Liberation Sans';font-size:11.0px;font-weight:400;color:#2a6e9c;letter-spacing:0px;line-height:1;white-space:pre;transform:scaleX(0.8514);transform-origin:0 50%;">TGSS :</div>
<div style="position:absolute;left:908.80px;top:387.00px;font-family:'Liberation Sans';font-size:11.0px;font-weight:400;color:#555;letter-spacing:0px;line-height:1;white-space:pre;transform:scaleX(0.9180);transform-origin:0 50%;">(19/01/2026) SI ESTA AL CORRIENTE</div>
<div style="position:absolute;left:870.52px;top:408.00px;font-family:'Liberation Sans';font-size:11.0px;font-weight:400;color:#2a6e9c;letter-spacing:0px;line-height:1;white-space:pre;transform:scaleX(0.8815);transform-origin:0 50%;">RCP :</div>
<div style="position:absolute;left:908.80px;top:408.00px;font-family:'Liberation Sans';font-size:11.0px;font-weight:400;color:#555;letter-spacing:0px;line-height:1;white-space:pre;transform:scaleX(0.9180);transform-origin:0 50%;">(19/01/2026) SI ESTA AL CORRIENTE</div>
<div style="position:absolute;left:871.40px;top:429.00px;font-family:'Liberation Sans';font-size:11.0px;font-weight:400;color:#2a6e9c;letter-spacing:0px;line-height:1;white-space:pre;transform:scaleX(0.9453);transform-origin:0 50%;">Consumo de Ayudas por reaval de CERSA:</div>
<div style="position:absolute;left:1123.00px;top:428.00px;font-family:'Liberation Sans';font-size:11.0px;font-weight:400;color:#666;letter-spacing:0px;line-height:1;white-space:pre;transform:scaleX(1.0127);transform-origin:0 50%;">23/01/2026</div>
<div style="position:absolute;left:1055.90px;top:449.00px;font-family:'Liberation Sans';font-size:11.0px;font-weight:400;color:#2a6e9c;letter-spacing:0px;line-height:1;white-space:pre;transform:scaleX(0.9553);transform-origin:0 50%;">Consumo</div>
<div style="position:absolute;left:1159.39px;top:449.00px;font-family:'Liberation Sans';font-size:11.0px;font-weight:400;color:#2a6e9c;letter-spacing:0px;line-height:1;white-space:pre;transform:scaleX(1.0060);transform-origin:0 50%;">Disponible</div>
<div style="position:absolute;left:917.20px;top:465.00px;font-family:'Liberation Sans';font-size:11.0px;font-weight:400;color:#2a6e9c;letter-spacing:0px;line-height:1;white-space:pre;transform:scaleX(0.9952);transform-origin:0 50%;">MINIMIS</div>
<div style="position:absolute;left:1046.41px;top:465.00px;font-family:'Liberation Sans';font-size:11.0px;font-weight:400;color:#555;letter-spacing:0px;line-height:1;white-space:pre;transform:scaleX(0.9889);transform-origin:0 50%;">10.769,00€</div>
<div style="position:absolute;left:1151.00px;top:465.00px;font-family:'Liberation Sans';font-size:11.0px;font-weight:400;color:#555;letter-spacing:0px;line-height:1;white-space:pre;transform:scaleX(0.9787);transform-origin:0 50%;">289.231,00€</div>
<div style="position:absolute;left:917.25px;top:485.00px;font-family:'Liberation Sans';font-size:11.0px;font-weight:400;color:#2a6e9c;letter-spacing:0px;line-height:1;white-space:pre;transform:scaleX(0.9534);transform-origin:0 50%;">M.T. COVID-19</div>
<div style="position:absolute;left:1073.50px;top:485.00px;font-family:'Liberation Sans';font-size:11.0px;font-weight:400;color:#555;letter-spacing:0px;line-height:1;white-space:pre;transform:scaleX(0.9750);transform-origin:0 50%;">0,00€</div>
<div style="position:absolute;left:1183.70px;top:485.00px;font-family:'Liberation Sans';font-size:11.0px;font-weight:400;color:#555;letter-spacing:0px;line-height:1;white-space:pre;transform:scaleX(0.9643);transform-origin:0 50%;">0,00€</div>
<div style="position:absolute;left:917.28px;top:505.00px;font-family:'Liberation Sans';font-size:11.0px;font-weight:400;color:#2a6e9c;letter-spacing:0px;line-height:1;white-space:pre;transform:scaleX(0.9219);transform-origin:0 50%;">M.T. UCRANIA</div>
<div style="position:absolute;left:1046.39px;top:505.00px;font-family:'Liberation Sans';font-size:11.0px;font-weight:400;color:#555;letter-spacing:0px;line-height:1;white-space:pre;transform:scaleX(1.0075);transform-origin:0 50%;">11.794,48€</div>
<div style="position:absolute;left:1142.50px;top:505.00px;font-family:'Liberation Sans';font-size:11.0px;font-weight:400;color:#555;letter-spacing:0px;line-height:1;white-space:pre;transform:scaleX(0.9743);transform-origin:0 50%;">2.238.205,53€</div>
<div style="position:absolute;left:917.34px;top:525.00px;font-family:'Liberation Sans';font-size:11.0px;font-weight:400;color:#2a6e9c;letter-spacing:0px;line-height:1;white-space:pre;transform:scaleX(0.8636);transform-origin:0 50%;">EGF</div>
<div style="position:absolute;left:1073.50px;top:525.00px;font-family:'Liberation Sans';font-size:11.0px;font-weight:400;color:#555;letter-spacing:0px;line-height:1;white-space:pre;transform:scaleX(0.9750);transform-origin:0 50%;">0,00€</div>
<div style="position:absolute;left:1183.70px;top:525.00px;font-family:'Liberation Sans';font-size:11.0px;font-weight:400;color:#555;letter-spacing:0px;line-height:1;white-space:pre;transform:scaleX(0.9643);transform-origin:0 50%;">0,00€</div>
<div style="position:absolute;left:870.80px;top:553.00px;font-family:'Liberation Sans';font-size:7.5px;font-weight:400;color:#555;letter-spacing:0px;line-height:1;white-space:pre;transform:scaleX(0.8967);transform-origin:0 50%;">CNAE NO EMPRENDIMIENTO INDUSTRIAL</div>
<div style="position:absolute;left:870.80px;top:563.00px;font-family:'Liberation Sans';font-size:7.5px;font-weight:400;color:#555;letter-spacing:0px;line-height:1;white-space:pre;transform:scaleX(0.8820);transform-origin:0 50%;">F FORMALIZACION FUERA INTERVALO</div>
<div style="position:absolute;left:870.80px;top:573.00px;font-family:'Liberation Sans';font-size:7.5px;font-weight:400;color:#555;letter-spacing:0px;line-height:1;white-space:pre;transform:scaleX(0.9294);transform-origin:0 50%;">%COMISION AVAL MAS 1.2%</div>
<div style="position:absolute;left:53px;top:595px;width:394px;height:107px;border:1px solid #c9c9c9;background:#fff;"></div>
<div style="position:absolute;left:54px;top:596px;width:30px;height:105px;background:#e6e6e6;"></div>
<div style="position:absolute;left:54px;top:596px;width:30px;height:28px;background:#fff;"></div>
<div style="position:absolute;left:83px;top:596px;width:1px;height:61px;background:#d8d8d8;"></div>
<svg style="position:absolute;left:60px;top:604px" width="12" height="12" viewBox="0 0 12 12"><path d="M0 1.5Q0 0 1.5 0H10.5Q12 0 12 1.5V8L8 12H1.5Q0 12 0 10.5z" fill="#a1bdcc"/><path d="M12 8V9L9 12H8L12 8z M8 12V9.5Q8 8 9.5 8H12" fill="#1d5a80"/><g fill="#e8f0f4"><rect x="2" y="2.5" width="1" height="1"/><rect x="2" y="5" width="1" height="1"/><rect x="2" y="7.5" width="1" height="1"/></g></svg>
<svg style="position:absolute;left:60px;top:632px" width="12" height="12" viewBox="0 0 12 12"><path d="M0 1.5Q0 0 1.5 0H10.5Q12 0 12 1.5V8L8 12H1.5Q0 12 0 10.5z" fill="#a1bdcc"/><path d="M12 8V9L9 12H8L12 8z M8 12V9.5Q8 8 9.5 8H12" fill="#1d5a80"/><g fill="#e8f0f4"><rect x="2" y="2.5" width="1" height="1"/><rect x="2" y="5" width="1" height="1"/><rect x="2" y="7.5" width="1" height="1"/></g></svg>
<div style="position:absolute;left:91.29px;top:602.00px;font-family:'Liberation Sans';font-size:12.0px;font-weight:400;color:#1b5f8f;letter-spacing:0px;line-height:1;white-space:pre;transform:scaleX(1.0115);transform-origin:0 50%;">(CERSA) Objeto/Destino</div>
<div style="position:absolute;left:91px;top:621px;width:350px;height:75px;border:1px solid #d0d0d0;border-radius:4px;background:#fff;"></div>
<div style="position:absolute;left:422px;top:624px;width:16px;height:70px;background:#efefef;"></div>
<svg style="position:absolute;left:425.5px;top:629.5px" width="9" height="7" viewBox="0 0 9 7"><path d="M0.3 6.5H8.7L5 1Q4.5 0.4 4 1z" fill="#9a9a9a"/></svg>
<svg style="position:absolute;left:425.5px;top:683px" width="9" height="7" viewBox="0 0 9 7"><path d="M0.3 0.5H8.7L5 6Q4.5 6.6 4 6z" fill="#9a9a9a"/></svg>
<div style="position:absolute;left:97.72px;top:626.00px;font-family:'Liberation Sans';font-size:15.0px;font-weight:400;color:#1e6494;letter-spacing:0px;line-height:1;white-space:pre;transform:scaleX(0.9779);transform-origin:0 50%;">Liquidez para gastos de gestión corriente.</div>
<div style="position:absolute;left:97.81px;top:645.00px;font-family:'Liberation Sans';font-size:15.0px;font-weight:400;color:#1e6494;letter-spacing:0px;line-height:1;white-space:pre;transform:scaleX(0.8874);transform-origin:0 50%;">RENOVACIÓN PÓLIZA. OK PRTR</div>
<div style="position:absolute;left:453px;top:595px;width:830px;height:107px;border:1px solid #c9c9c9;background:#fff;"></div>
<div style="position:absolute;left:454px;top:596px;width:30px;height:105px;background:#e6e6e6;"></div>
<div style="position:absolute;left:454px;top:596px;width:30px;height:28px;background:#fff;"></div>
<div style="position:absolute;left:483px;top:596px;width:1px;height:61px;background:#d8d8d8;"></div>
<svg style="position:absolute;left:459px;top:604px" width="15" height="13" viewBox="0 0 15 13"><path d="M0.6 3V0.6H3 M11.5 0.6H14V3 M14 10V12.4H11.5 M3 12.4H0.6V10" fill="none" stroke="#5e955e" stroke-width="1.1"/><g fill="#a9c8a9"><rect x="5" y="2.5" width="5" height="1.6"/><rect x="3.5" y="5" width="5" height="1.6"/><rect x="4" y="7.5" width="4" height="1.3"/><rect x="3.5" y="9.3" width="6.5" height="1"/><rect x="10.2" y="6" width="1" height="1"/></g></svg>
<svg style="position:absolute;left:459px;top:633px" width="15" height="9" viewBox="0 0 15 9"><rect x="0" y="0" width="14" height="9" rx="2" fill="#ebd3a6"/><rect x="2.5" y="3.8" width="6" height="1.3" fill="#d4963a"/><circle cx="10.5" cy="4" r="1.3" fill="#d4963a"/><rect x="2" y="6" width="9" height="1" fill="#f5e6cc"/></svg>
<div style="position:absolute;left:489px;top:602px;width:788px;height:25px;background:#e7e7eb;border:1px solid #d8d8e4;"></div>
<div style="position:absolute;left:592px;top:602px;width:1px;height:46px;background:#cfd4e0;"></div>
<div style="position:absolute;left:535.50px;top:609.00px;font-family:'Liberation Sans';font-size:11.0px;font-weight:400;color:#3b8bc2;letter-spacing:0px;line-height:1;white-space:pre;transform:scaleX(0.9071);transform-origin:0 50%;">Cit</div>
<div style="position:absolute;left:920.60px;top:609.00px;font-family:'Liberation Sans';font-size:11.0px;font-weight:400;color:#3b8bc2;letter-spacing:0px;line-height:1;white-space:pre;transform:scaleX(1.0800);transform-origin:0 50%;">Titular</div>
<div style="position:absolute;left:489px;top:627px;width:788px;height:22px;background:#c3dee6;border-bottom:1px solid #2a78ae;"></div>
<div style="position:absolute;left:489px;top:627px;width:103px;height:20px;background:#dbe8ef;"></div>
<div style="position:absolute;left:592px;top:627px;width:1px;height:20px;background:#a9cad8;"></div>
<div style="position:absolute;left:489px;top:627px;width:1px;height:20px;background:#a9cad8;"></div>
<div style="position:absolute;left:491.60px;top:633.00px;font-family:'Liberation Sans';font-size:11.0px;font-weight:400;color:#333;letter-spacing:0px;line-height:1;white-space:pre;transform:scaleX(1.0000);transform-origin:0 50%;">B</div>
<div style="position:absolute;left:530.00px;top:632.00px;font-family:'Liberation Sans';font-size:11.0px;font-weight:400;color:#555;letter-spacing:0px;line-height:1;white-space:pre;transform:scaleX(0.9583);transform-origin:0 50%;">3001</div>
<div style="position:absolute;left:499px;top:633px;width:50px;height:8px;background:#bdbdbd;filter:blur(1.2px);border-radius:3px;"></div>
<div style="position:absolute;left:595.00px;top:633.00px;font-family:'Liberation Sans';font-size:11.0px;font-weight:400;color:#333;letter-spacing:0px;line-height:1;white-space:pre;transform:scaleX(1.0000);transform-origin:0 50%;">L</div>
<div style="position:absolute;left:601px;top:633px;width:68px;height:8px;background:#c4c4c4;filter:blur(1.2px);border-radius:3px;"></div>
<div style="position:absolute;left:671.50px;top:633.00px;font-family:'Liberation Sans';font-size:11.0px;font-weight:400;color:#333;letter-spacing:0px;line-height:1;white-space:pre;transform:scaleX(0.9615);transform-origin:0 50%;">SL</div>
<svg style="position:absolute;left:492px;top:672px" width="24" height="23" viewBox="0 0 24 23"><circle cx="12" cy="11.5" r="11.5" fill="#a6cde3"/><g fill="#1a72ae"><circle cx="12.1" cy="7.6" r="1.3"/><rect x="11" y="10" width="2.3" height="7.5"/><rect x="9.2" y="16.2" width="6" height="1.6"/><rect x="9.6" y="10" width="2" height="1.2"/></g></svg>
<div style="position:absolute;left:521.50px;top:680.00px;font-family:'Liberation Sans';font-size:11.0px;font-weight:400;color:#2a6a98;letter-spacing:0px;line-height:1;white-space:pre;transform:scaleX(1.0040);transform-origin:0 50%;">Lista de componentes enviado en la última estimación del Grupo Económico.</div>
<div style="position:absolute;left:1130px;top:675px;width:142px;height:19px;background:linear-gradient(#1a7db5,#1270aa);border-radius:4px;"></div>
<svg style="position:absolute;left:1136px;top:679px" width="11" height="11" viewBox="0 0 11 11"><path d="M0.6 3V0.6H3 M8 0.6H10.4V3 M10.4 8V10.4H8 M3 10.4H0.6V8" fill="none" stroke="#8fc0e0" stroke-width="1"/><circle cx="5.5" cy="5.5" r="2.2" fill="none" stroke="#8fc0e0" stroke-width="1"/></svg>
<div style="position:absolute;left:1158.60px;top:680.00px;font-family:'Liberation Sans';font-size:11.0px;font-weight:400;color:#fff;letter-spacing:0px;line-height:1;white-space:pre;transform:scaleX(0.9241);transform-origin:0 50%;">GRUPO ECONÓMICO</div>
<div style="position:absolute;left:704px;top:717px;width:114px;height:29px;background:linear-gradient(#648662,#4f6f4d);border-radius:4px;border:1px solid #4a684a;"></div>
<svg style="position:absolute;left:715px;top:726px" width="16" height="12" viewBox="0 0 16 12"><path d="M0 1Q0 0 1 0H9L12 3V6L7 11V12H1Q0 12 0 11z" fill="#8fa38d"/><rect x="2.5" y="1" width="5" height="3" fill="#62825f"/><circle cx="5" cy="8" r="1.6" fill="#62825f"/><path d="M7.8 12L8.4 9.6L13 5L15.2 7.2L10.6 11.8z" fill="#f2f2ea"/></svg>
<div style="position:absolute;left:741.10px;top:725.00px;font-family:'Liberation Sans';font-size:13.0px;font-weight:400;color:#f3eed6;letter-spacing:0px;line-height:1;white-space:pre;transform:scaleX(0.9516);transform-origin:0 50%;">GUARDAR</div>
<div style="position:absolute;left:823px;top:717px;width:173px;height:29px;background:#fff;border:1px solid #2a7ab3;border-radius:4px;"></div>
<svg style="position:absolute;left:832px;top:725px" width="17" height="14" viewBox="0 0 17 14"><g fill="#1f74b0"><circle cx="2" cy="1.5" r="1.5"/><rect x="1.3" y="1.5" width="1.4" height="11"/><rect x="1.3" y="6.3" width="4" height="1.3"/><rect x="1.3" y="11.4" width="4" height="1.3"/><circle cx="5.5" cy="7" r="1.5"/><circle cx="5.5" cy="12" r="1.5"/></g><g fill="#8cbde0"><rect x="6" y="1" width="10.5" height="1.6"/><rect x="8" y="6.2" width="8.5" height="1.6"/><rect x="8" y="11.2" width="8.5" height="1.6"/></g></svg>
<div style="position:absolute;left:860.27px;top:726.00px;font-family:'Liberation Sans';font-size:13.0px;font-weight:400;color:#000;letter-spacing:0px;line-height:1;white-space:pre;transform:scaleX(0.9328);transform-origin:0 50%;">LOG ESTIMACIONES</div>
<div style="position:absolute;left:1001px;top:717px;width:199px;height:29px;background:#fff;border:1px solid #2a7ab3;border-radius:4px;"></div>
<svg style="position:absolute;left:1012px;top:724px" width="13" height="15" viewBox="0 0 13 15"><rect x="0" y="0" width="13" height="15" rx="1.5" fill="#b9c8b9"/><path d="M3 4.5Q6.5 3 10 4.5M3 10.5Q6.5 12 10 10.5" fill="none" stroke="#7f967f" stroke-width="1"/><rect x="0" y="7" width="13" height="1" fill="#9aac9a"/></svg>
<div style="position:absolute;left:1039.20px;top:726.00px;font-family:'Liberation Sans';font-size:13.0px;font-weight:400;color:#000;letter-spacing:0px;line-height:1;white-space:pre;transform:scaleX(0.9549);transform-origin:0 50%;">ARCHIVO DOCUMENTAL</div>
<div style="position:absolute;left:1205px;top:717px;width:87px;height:29px;background:#fff;border:1px solid #2a7ab3;border-radius:4px;"></div>
<svg style="position:absolute;left:1215px;top:725px" width="16" height="14" viewBox="0 0 16 14"><path d="M5 0.8H1.5Q0.8 0.8 0.8 1.5V12.5Q0.8 13.2 1.5 13.2H5" fill="none" stroke="#8cbde0" stroke-width="1.5"/><path d="M5 7H14M10.5 3.3L14.3 7L10.5 10.7" fill="none" stroke="#2a7ab3" stroke-width="1.6"/></svg>
<div style="position:absolute;left:1241.86px;top:726.00px;font-family:'Liberation Sans';font-size:13.0px;font-weight:400;color:#000;letter-spacing:0px;line-height:1;white-space:pre;transform:scaleX(0.9444);transform-origin:0 50%;">SALIR</div>
</body></html>
